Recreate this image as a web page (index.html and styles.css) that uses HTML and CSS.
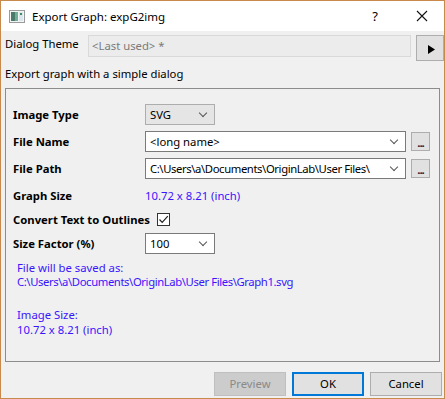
FILE: index.html
```html
<!DOCTYPE html>
<html>
	<head>
		<meta charset="utf-8" />
		<title>Export Graph</title>
		<link rel="stylesheet" href="styles.css">
	</head>
	<body>
		<div class="window">
			<div class="titlebar">
				<svg class="appicon" width="16" height="13" viewBox="0 0 16 13">
					<rect x="0.5" y="0.5" width="15" height="12" fill="#f4f4f4" stroke="#9a9a9a"/>
					<rect x="2" y="2" width="4" height="9" fill="#4a7a68"/>
					<rect x="6" y="2" width="3" height="9" fill="#6fae9a"/>
					<rect x="10" y="2" width="4" height="9" fill="#d9e6ee"/>
					<rect x="11" y="3" width="2" height="2" fill="#3d8f5a"/>
				</svg>
				<span class="title">Export Graph: expG2img</span>
				<span class="help">?</span>
				<svg class="close" width="12" height="12" viewBox="0 0 12 12">
					<path d="M1 1 L11 11 M11 1 L1 11" stroke="#111" stroke-width="1.1"/>
				</svg>
			</div>
			<div class="content">
				<div class="theme-row">
					<span class="theme-label">Dialog Theme</span>
					<div class="theme-box">&lt;Last used&gt; *</div>
					<div class="theme-btn">
						<svg width="8" height="9" viewBox="0 0 8 9"><path d="M1 0 L8 4.5 L1 9 Z" fill="#000"/></svg>
					</div>
				</div>
				<div class="desc">Export graph with a simple dialog</div>
				<div class="group">
					<div class="row">
						<span class="label">Image Type</span>
						<div class="combo short readonly">SVG<i class="chev"></i></div>
					</div>
					<div class="row">
						<span class="label">File Name</span>
						<div class="combo long">&lt;long name&gt;<i class="chev"></i></div>
						<div class="dots">...</div>
					</div>
					<div class="row">
						<span class="label">File Path</span>
						<div class="combo long path">C:\Users\a\Documents\OriginLab\User Files\<i class="chev"></i></div>
						<div class="dots">...</div>
					</div>
					<div class="row">
						<span class="label">Graph Size</span>
						<span class="value">10.72 x 8.21 (inch)</span>
					</div>
					<div class="row check-row">
						<span class="label auto">Convert Text to Outlines</span>
						<div class="checkbox">
							<svg width="11" height="11" viewBox="0 0 11 11"><path d="M1.5 5.5 L4.2 8.3 L9.8 2.2" fill="none" stroke="#222" stroke-width="1.2"/></svg>
						</div>
					</div>
					<div class="row">
						<span class="label">Size Factor (%)</span>
						<div class="combo short">100<i class="chev"></i></div>
					</div>
					<div class="info first">File will be saved as:<br><span class="path">C:\Users\a\Documents\OriginLab\User Files\Graph1.svg</span></div>
					<div class="info second">Image Size:<br>10.72 x 8.21 (inch)</div>
				</div>
				<div class="buttons">
					<div class="btn disabled">Preview</div>
					<div class="btn default">OK</div>
					<div class="btn">Cancel</div>
				</div>
			</div>
		</div>
	</body>
</html>
```

FILE: styles.css
```css
*{
	box-sizing: border-box;
}
body{
	margin: 0;
	font: 11.3px "Noto Sans", "Liberation Sans", sans-serif;
	color: #000;
}
.window{
	width: 445px;
	height: 399px;
	border: 1px solid #c8894c;
	background: #f0f0f0;
	overflow: hidden;
}
.titlebar{
	height: 30px;
	background: #fff;
	display: flex;
	align-items: center;
	padding-left: 8px;
}
.appicon{
	margin-right: 7px;
}
.title{
	flex: 1;
	font-size: 11.5px;
}
.help{
	font-size: 13px;
	margin-right: 38px;
}
.close{
	margin-right: 16px;
}
.content{
	padding: 4px 0 0 4px;
}
.theme-row{
	display: flex;
	align-items: flex-start;
	height: 26px;
}
.theme-label{
	width: 83px;
	line-height: 18px;
}
.theme-box{
	width: 323px;
	height: 22px;
	border: 1px solid #d9d9d9;
	background: #ececec;
	color: #7a7a7a;
	padding-left: 3px;
	line-height: 20px;
}
.theme-btn{
	width: 28px;
	height: 26px;
	margin-left: 5px;
	background: #e1e1e1;
	border: 1px solid #adadad;
	display: flex;
	align-items: center;
	padding-left: 10px;
	padding-top: 3px;
}
.desc{
	margin-top: 4px;
	line-height: 18px;
}
.group{
	margin-top: 5px;
	width: 435px;
	height: 274px;
	border: 1px solid #8c8c8c;
	padding: 15px 0 0 7px;
}
.row{
	display: flex;
	align-items: center;
	height: 21px;
	margin-bottom: 6px;
}
.check-row{
	height: 15px;
}
.label{
	width: 132px;
	font-weight: bold;
}
.label.auto{
	width: auto;
	margin-right: 7px;
}
.combo{
	height: 21px;
	border: 1px solid #7a7a7a;
	background: #fff;
	padding-left: 4px;
	line-height: 19px;
	position: relative;
	white-space: nowrap;
	overflow: hidden;
}
.combo.short{
	width: 70px;
}
.combo.long{
	width: 261px;
}
.combo.readonly{
	background: #e5e5e5;
	border-color: #adadad;
}
.path{
	letter-spacing: -0.4px;
}
.chev{
	position: absolute;
	right: 8px;
	top: 5px;
	width: 6px;
	height: 6px;
	border-right: 1px solid #555;
	border-bottom: 1px solid #555;
	transform: rotate(45deg);
}
.dots{
	width: 19px;
	height: 19px;
	margin-left: 5px;
	background: #e1e1e1;
	border: 1px solid #adadad;
	color: #1a1a3a;
	font-weight: bold;
	text-align: center;
	line-height: 20px;
	letter-spacing: -1px;
}
.value{
	color: #3a14ff;
}
.checkbox{
	width: 13px;
	height: 13px;
	border: 1px solid #333;
	background: #fff;
	display: flex;
	align-items: center;
	justify-content: center;
}
.info{
	color: #3a14ff;
	margin-left: 4px;
	line-height: 14px;
}
.info.first{
	margin-top: 7px;
}
.info.second{
	margin-top: 18px;
	line-height: 15px;
}
.buttons{
	display: flex;
	justify-content: flex-end;
	gap: 6px;
	margin-top: 10px;
	padding-right: 2px;
}
.btn{
	width: 72px;
	height: 24px;
	background: #e1e1e1;
	border: 1px solid #adadad;
	text-align: center;
	line-height: 22px;
}
.btn.disabled{
	background: #cccccc;
	border-color: #bfbfbf;
	color: #8a8a8a;
}
.btn.default{
	border: 2px solid #0078d7;
	line-height: 20px;
}
```
